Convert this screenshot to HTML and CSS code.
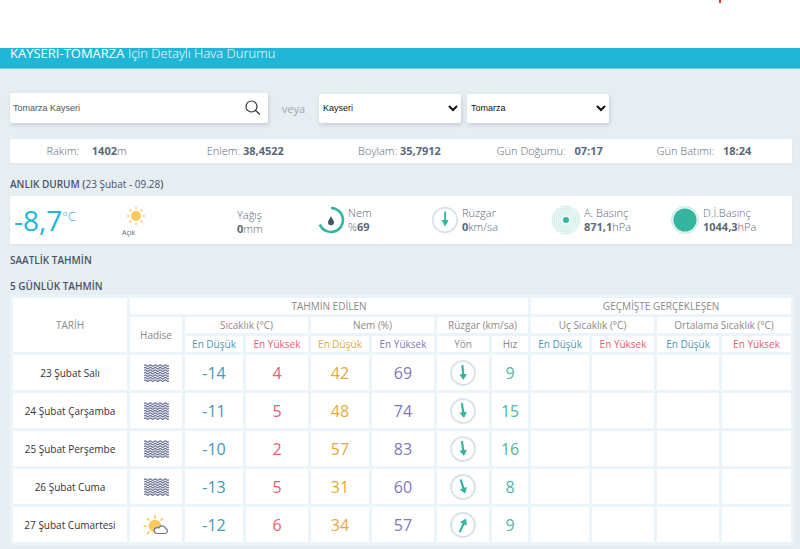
FILE: index.html
```html
<!DOCTYPE html>
<html lang="tr">
<head>
  <meta charset="UTF-8">
  <meta name="viewport" content="width=device-width, initial-scale=1.0">
  <title>Kayseri-Tomarza Hava Durumu</title>
  <link rel="stylesheet" href="styles.css">
</head>
<body>
  <!-- Shared icons -->
  <svg class="icon-defs" aria-hidden="true">
    <symbol id="fog" viewBox="0 0 25 18">
      <g fill="none" stroke="#6b7496" stroke-width="1.3">
        <path id="wave" d="M0 1.6 q1.25 -1.4 2.5 0 t2.5 0 t2.5 0 t2.5 0 t2.5 0 t2.5 0 t2.5 0 t2.5 0 t2.5 0 t2.5 0"/>
        <use href="#wave" y="2.5"/>
        <use href="#wave" y="5"/>
        <use href="#wave" y="7.5"/>
        <use href="#wave" y="10"/>
        <use href="#wave" y="12.5"/>
        <use href="#wave" y="15"/>
      </g>
    </symbol>
    <symbol id="wind" viewBox="0 0 28 28">
      <path d="M12.6 4 h2.8 v11.5 h3.400 L14 23 L9.200 15.500 h3.400 z" fill="#35b5a0"/>
    </symbol>
  </svg>

  <div class="top">
    <span class="dot"></span>
  </div>

  <h1 class="title"><strong>KAYSERİ-TOMARZA</strong> İçin Detaylı Hava Durumu</h1>

  <main class="content">
    <!-- Search -->
    <form class="search">
      <div class="search-box">
        <input type="text" class="search-input" aria-label="Merkez ara" value="Tomarza Kayseri">
        <button type="button" class="search-button" aria-label="Ara">
          <svg width="16" height="16" viewBox="0 0 16 16" fill="none" stroke="#333" stroke-width="1.2">
            <circle cx="6.500" cy="6.500" r="5.500"/>
            <path d="M10.500 10.500 L15 14.500"/>
          </svg>
        </button>
      </div>
      <span class="or">veya</span>
      <select class="select" aria-label="İl"><option>Kayseri</option></select>
      <select class="select" aria-label="İlçe"><option>Tomarza</option></select>
    </form>

    <!-- Station info -->
    <div class="info">
      <div>Rakım: <b class="wide">1402</b>m</div>
      <div>Enlem: <b>38,4522</b></div>
      <div>Boylam: <b>35,7912</b></div>
      <div>Gün Doğumu: <b class="near">07:17</b></div>
      <div>Gün Batımı: <b class="near">18:24</b></div>
    </div>

    <h2 class="heading">ANLIK DURUM (<span>23 Şubat - 09.28</span>)</h2>

    <!-- Current state -->
    <div class="now">
      <div class="temp">-8,7<span>°C</span></div>
      <div class="sky">
        <svg width="20" height="20" viewBox="0 0 20 20">
          <circle cx="10" cy="10" r="5" fill="#fdc95c"/>
          <path d="M10 1v2.500M10 16.500V19M1 10h2.500M16.500 10H19M3.600 3.600l1.800 1.800M14.600 14.600l1.800 1.800M3.600 16.400l1.800-1.800M14.600 5.400l1.800-1.800" stroke="#fdc95c" stroke-width="1.400"/>
        </svg>
        <span>Açık</span>
      </div>
      <div class="measure rain">
        <p>Yağış<br><b>0</b>mm</p>
      </div>
      <div class="measure">
        <svg width="28" height="28" viewBox="0 0 28 28">
          <path d="M14 2 A12 12 0 1 1 2.800 18.400" fill="none" stroke="#35b5a0" stroke-width="2.600"/>
          <path d="M14 10 C15 13 17 14 17 16.200 A3 3 0 0 1 11 16.200 C11 14 13 13 14 10z" fill="#47536b"/>
        </svg>
        <p>Nem<br>%<b>69</b></p>
      </div>
      <div class="measure">
        <svg width="28" height="28" viewBox="0 0 28 28">
          <circle cx="14" cy="14" r="12.200" fill="none" stroke="#dbe3e9" stroke-width="2"/>
          <path d="M13.200 5.500h1.800v8.500h2.700L14.100 20.500L10.500 14h2.700z" fill="#35b5a0"/>
        </svg>
        <p>Rüzgar<br><b>0</b>km/sa</p>
      </div>
      <div class="measure">
        <svg width="30" height="30" viewBox="0 0 30 30">
          <g fill="#eef9f7" stroke="#c3e8e2" stroke-width=".7">
            <circle cx="15" cy="15" r="14"/>
            <circle cx="15" cy="15" r="12"/>
            <circle cx="15" cy="15" r="10"/>
            <circle cx="15" cy="15" r="8"/>
            <circle cx="15" cy="15" r="6"/>
          </g>
          <circle cx="15" cy="15" r="3" fill="#35b5a0"/>
        </svg>
        <p>A. Basınç<br><b>871,1</b>hPa</p>
      </div>
      <div class="measure">
        <svg width="30" height="30" viewBox="0 0 30 30">
          <circle cx="15" cy="15" r="13.500" fill="#e4f5f2" stroke="#c3e8e2"/>
          <circle cx="15" cy="15" r="11.500" fill="#35b5a0"/>
        </svg>
        <p>D.İ.Basınç<br><b>1044,3</b>hPa</p>
      </div>
    </div>

    <h2 class="heading">SAATLİK TAHMİN</h2>
    <h2 class="heading last">5 GÜNLÜK TAHMİN</h2>

    <!-- Five day forecast -->
    <table class="forecast">
      <colgroup>
        <col class="c-date"><col class="c-event">
        <col class="c-low"><col class="c-high">
        <col class="c-low"><col class="c-high">
        <col class="c-event"><col class="c-speed">
        <col class="c-low"><col class="c-high">
        <col class="c-high"><col class="c-end">
      </colgroup>
      <thead>
        <tr>
          <th rowspan="3">TARİH</th>
          <th colspan="7">TAHMİN EDİLEN</th>
          <th colspan="4">GEÇMİŞTE GERÇEKLEŞEN</th>
        </tr>
        <tr>
          <th rowspan="2">Hadise</th>
          <th colspan="2">Sıcaklık (°C)</th>
          <th colspan="2">Nem (%)</th>
          <th colspan="2">Rüzgar (km/sa)</th>
          <th colspan="2">Uç Sıcaklık (°C)</th>
          <th colspan="2">Ortalama Sıcaklık (°C)</th>
        </tr>
        <tr>
          <th class="cold">En Düşük</th>
          <th class="hot">En Yüksek</th>
          <th class="dry">En Düşük</th>
          <th class="humid">En Yüksek</th>
          <th>Yön</th>
          <th>Hız</th>
          <th class="cold">En Düşük</th>
          <th class="hot">En Yüksek</th>
          <th class="cold">En Düşük</th>
          <th class="hot">En Yüksek</th>
        </tr>
      </thead>
      <tbody>
        <tr>
          <td class="date">23 Şubat Salı</td>
          <td><svg class="fog"><use href="#fog"/></svg></td>
          <td class="cold">-14</td>
          <td class="hot">4</td>
          <td class="dry">42</td>
          <td class="humid">69</td>
          <td><svg class="wind"><use href="#wind"/></svg></td>
          <td class="speed">9</td>
          <td></td><td></td><td></td><td></td>
        </tr>
        <tr>
          <td class="date">24 Şubat Çarşamba</td>
          <td><svg class="fog"><use href="#fog"/></svg></td>
          <td class="cold">-11</td>
          <td class="hot">5</td>
          <td class="dry">48</td>
          <td class="humid">74</td>
          <td><svg class="wind turn-s"><use href="#wind"/></svg></td>
          <td class="speed">15</td>
          <td></td><td></td><td></td><td></td>
        </tr>
        <tr>
          <td class="date">25 Şubat Perşembe</td>
          <td><svg class="fog"><use href="#fog"/></svg></td>
          <td class="cold">-10</td>
          <td class="hot">2</td>
          <td class="dry">57</td>
          <td class="humid">83</td>
          <td><svg class="wind turn-s"><use href="#wind"/></svg></td>
          <td class="speed">16</td>
          <td></td><td></td><td></td><td></td>
        </tr>
        <tr>
          <td class="date">26 Şubat Cuma</td>
          <td><svg class="fog"><use href="#fog"/></svg></td>
          <td class="cold">-13</td>
          <td class="hot">5</td>
          <td class="dry">31</td>
          <td class="humid">60</td>
          <td><svg class="wind turn-sse"><use href="#wind"/></svg></td>
          <td class="speed">8</td>
          <td></td><td></td><td></td><td></td>
        </tr>
        <tr>
          <td class="date">27 Şubat Cumartesi</td>
          <td>
            <svg class="cloudy" viewBox="0 0 26 22">
              <circle cx="12" cy="12" r="6.300" fill="#fdc95c"/>
              <path d="M12 1v3.500M.5 12h3.700M4 4l2.500 2.500M20 4l-2.500 2.500M4 20l2.500-2.500" stroke="#fdc95c" stroke-width="1.500"/>
              <path d="M14 19.500 a3 3 0 0 1 -.5 -5.900 q1.500 -.2 2.200 .3 a4 4 0 0 1 7.200 .7 a2.600 2.600 0 0 1 -.4 4.900z" fill="#fff" stroke="#6b7496" stroke-width="1.200"/>
            </svg>
          </td>
          <td class="cold">-12</td>
          <td class="hot">6</td>
          <td class="dry">34</td>
          <td class="humid">57</td>
          <td><svg class="wind turn-nne"><use href="#wind"/></svg></td>
          <td class="speed">9</td>
          <td></td><td></td><td></td><td></td>
        </tr>
      </tbody>
    </table>
  </main>
</body>
</html>
```
FILE: styles.css
```css
* {
  box-sizing: border-box;
}

body {
  margin: 0;
  background-color: #e7eef2;
  font-family: "Open Sans", "Noto Sans", sans-serif;
  font-size: 11px;
  color: #5a6878;
}

.icon-defs {
  display: none;
}

/* Top strip */
.top {
  display: flex;
  justify-content: flex-end;
  height: 48px;
  padding-right: 79px;
  background-color: #fff;
}

.dot {
  width: 2px;
  height: 3px;
  background-color: #e33;
}

.title {
  margin: 0;
  height: 21px;
  padding-left: 10px;
  overflow: hidden;
  background-color: #20b6d6;
  border-bottom: 1px solid #6fcde0;
  color: #fff;
  font-size: 13px;
  font-weight: 300;
  line-height: 10px;
}

.title strong {
  font-weight: 500;
}

.content {
  padding: 24px 8px 6px 10px;
}

/* Search */
.search {
  display: flex;
  align-items: center;
}

.search-box {
  display: flex;
  align-items: center;
  flex: 0 1 258px;
  height: 30px;
  background-color: #fff;
  border-radius: 2px;
  box-shadow: 1px 2px 4px #c3cdd8;
}

.search-input {
  flex: 1;
  min-width: 0;
  padding: 0 3px;
  border: none;
  background: none;
  color: #555;
  font-family: "Liberation Sans", Arial, sans-serif;
  font-size: 9px;
}

.search-button {
  display: flex;
  padding: 0 7px;
  border: none;
  background: none;
  cursor: pointer;
}

.or {
  flex: 0 1 51px;
  color: #98a5b3;
  text-align: center;
}

.select {
  flex: 0 1 142px;
  height: 29px;
  margin-right: 6px;
  border: none;
  border-radius: 2px;
  background-color: #fff;
  box-shadow: 1px 2px 4px #c3cdd8;
  color: #111;
  font-family: "Liberation Sans", Arial, sans-serif;
  font-size: 9px;
}

/* Station info */
.info {
  display: grid;
  grid-template-columns: 153fr 164fr 144fr 156fr 152fr;
  margin-top: 16px;
  padding-right: 12px;
  background-color: #fff;
  box-shadow: 0 1px 2px #dbe3e9;
  font-weight: 300;
  line-height: 24px;
  text-align: center;
}

.info b,
.measure b {
  font-weight: 700;
}

.info .wide {
  margin-left: 10px;
}

.info .near {
  margin-left: 6px;
}

.heading {
  margin: 0;
  color: #47536b;
  font-size: 10px;
  font-weight: 600;
  line-height: 26px;
}

.heading span {
  font-weight: 400;
}

.info + .heading {
  padding-top: 10px;
  line-height: 23px;
}

.last {
  height: 22px;
}

/* Current state */
.now {
  display: grid;
  grid-template-columns: 108fr 115fr 80fr 114fr 120fr 119fr 122fr;
  align-items: center;
  height: 48px;
  margin-bottom: 3px;
  padding-left: 4px;
  background-color: #fff;
  box-shadow: 0 1px 2px #dbe3e9;
  font-weight: 300;
}

.temp {
  display: flex;
  color: #20b6d6;
  font-size: 28px;
  font-weight: 400;
  line-height: 36px;
}

.temp span {
  font-size: 13px;
  font-weight: 300;
  line-height: 28px;
}

.sky {
  display: flex;
  flex-direction: column;
  align-items: flex-start;
  padding-top: 5px;
}

.sky svg {
  margin-left: 4px;
}

.sky span {
  font-size: 7px;
  font-weight: 400;
  line-height: 14px;
}

.measure {
  display: flex;
  align-items: center;
  gap: 3px;
}

.measure p {
  margin: 0;
  line-height: 14px;
}

.rain p {
  padding-top: 4px;
}

/* Five day forecast */
.forecast {
  width: 100%;
  table-layout: fixed;
  border-collapse: collapse;
  text-align: center;
}

.c-date { width: 117px; }
.c-event { width: 55px; }
.c-low { width: 61px; }
.c-high { width: 65px; }
.c-speed { width: 39px; }
.c-end { width: 72px; }

.forecast th,
.forecast td {
  padding: 0;
  background-color: #fff;
  border: 3px solid #eaf4f9;
}

.forecast th {
  height: 19px;
  color: #8a8a8a;
  font-size: 10px;
  font-weight: 400;
  line-height: 14px;
}

.forecast td {
  height: 38px;
  font-size: 16px;
  line-height: 20px;
}

.forecast .date {
  color: #333;
  font-size: 10px;
}

.forecast th.cold,
.cold { color: #4597b8; }
.forecast th.hot,
.hot { color: #ec5a72; }
.forecast th.dry,
.dry { color: #e5a93b; }
.forecast th.humid,
.humid { color: #8178b5; }
.speed { color: #4cb8a2; }

.forecast svg {
  display: block;
  margin: 0 auto;
}

.fog {
  width: 25px;
  height: 18px;
}

.cloudy {
  width: 26px;
  height: 22px;
}

.wind {
  width: 26px;
  height: 26px;
  border: 2px solid #dbe3e9;
  border-radius: 50%;
  transform: rotate(-4deg);
}

.turn-s { transform: rotate(-8deg); }
.turn-sse { transform: rotate(-17deg); }
.turn-nne { transform: rotate(205deg); }
```
